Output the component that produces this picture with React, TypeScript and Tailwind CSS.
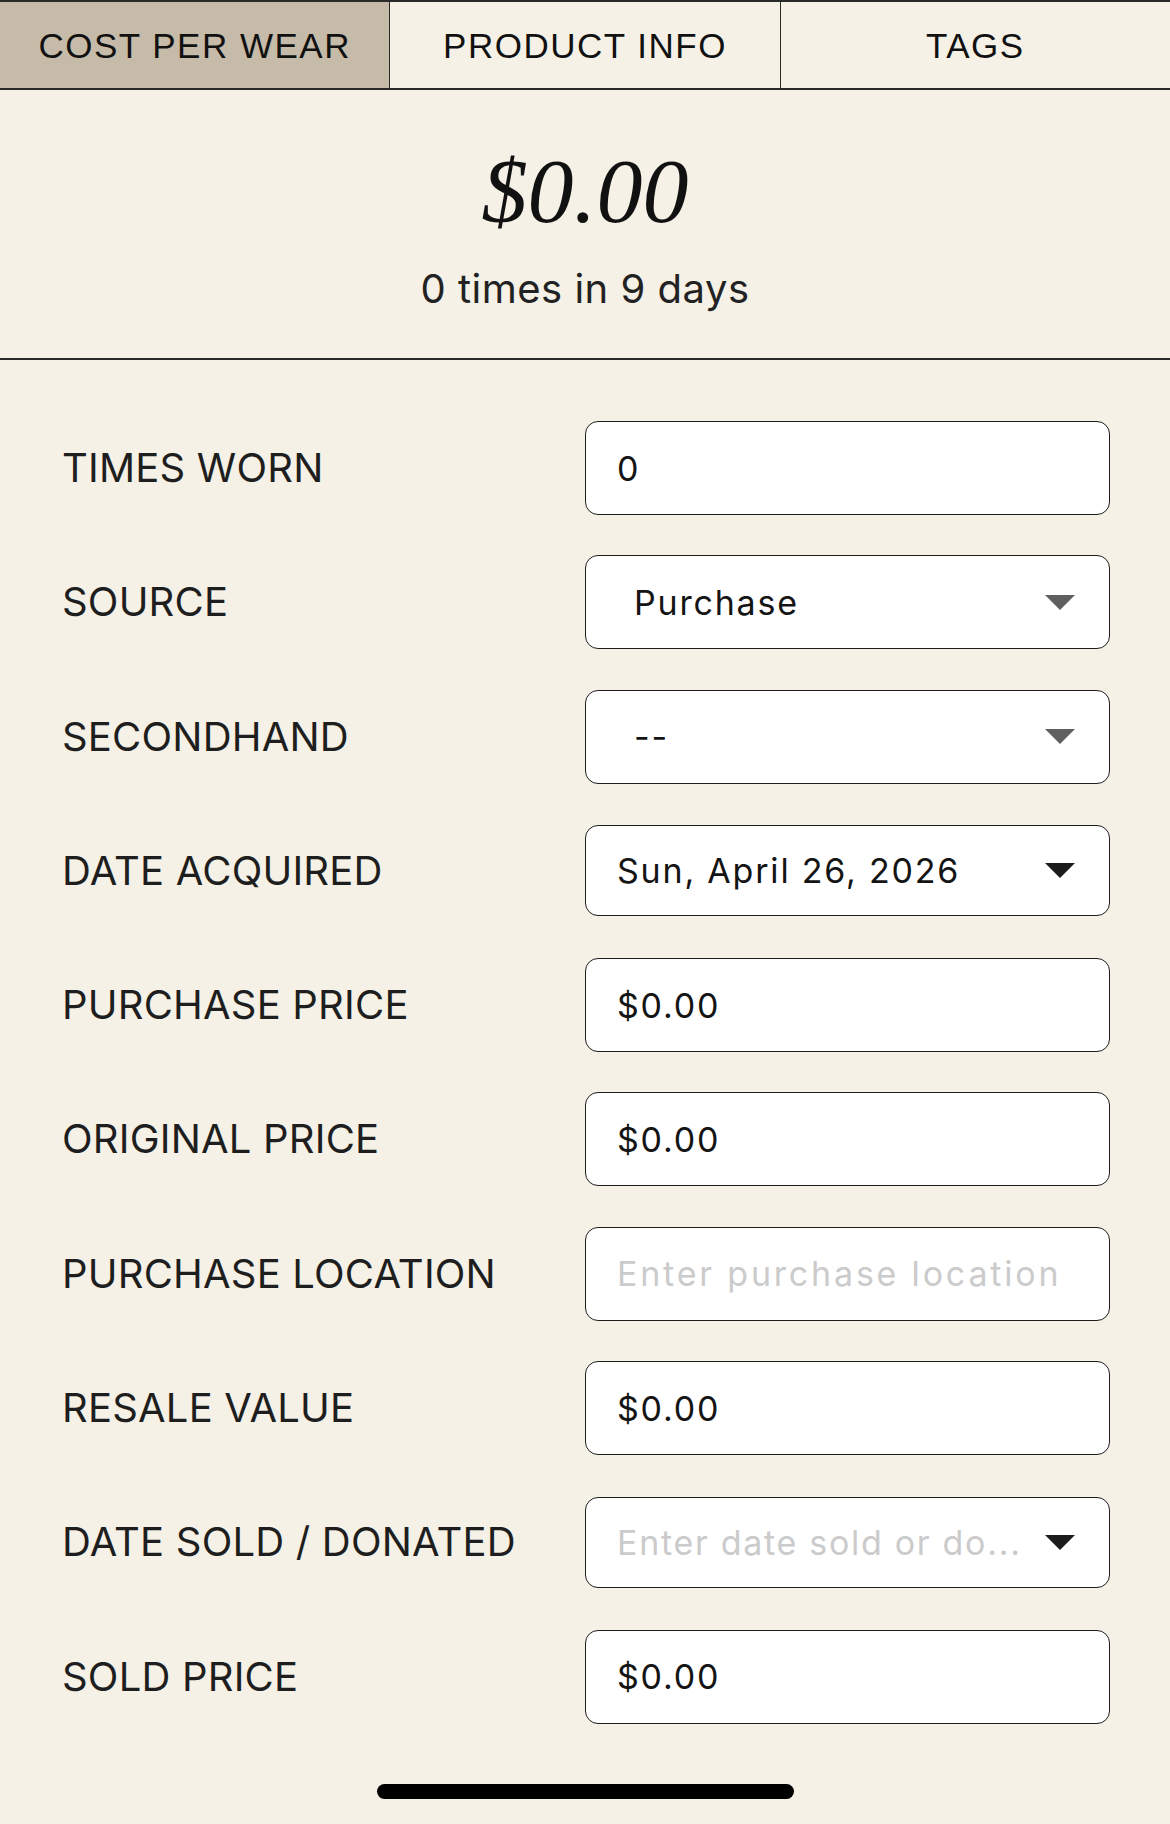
import React from 'react';

type Field = {
  label: string;
  value?: string;
  placeholder?: string;
  kind: 'input' | 'select' | 'date';
};

const fields: Field[] = [
  { label: 'TIMES WORN', value: '0', kind: 'input' },
  { label: 'SOURCE', value: 'Purchase', kind: 'select' },
  { label: 'SECONDHAND', value: '--', kind: 'select' },
  { label: 'DATE ACQUIRED', value: 'Sun, April 26, 2026', kind: 'date' },
  { label: 'PURCHASE PRICE', value: '$0.00', kind: 'input' },
  { label: 'ORIGINAL PRICE', value: '$0.00', kind: 'input' },
  { label: 'PURCHASE LOCATION', placeholder: 'Enter purchase location', kind: 'input' },
  { label: 'RESALE VALUE', value: '$0.00', kind: 'input' },
  { label: 'DATE SOLD / DONATED', placeholder: 'Enter date sold or do...', kind: 'date' },
  { label: 'SOLD PRICE', value: '$0.00', kind: 'input' },
];

const tabs = ['COST PER WEAR', 'PRODUCT INFO', 'TAGS'];

function Caret({ muted }: { muted?: boolean }) {
  return (
    <svg width="30" height="15" viewBox="0 0 30 15" className="shrink-0">
      <path d="M0 0 L30 0 L15 15 Z" fill={muted ? '#5f5f5f' : '#1c1c1c'} />
    </svg>
  );
}

function FieldBox({ field }: { field: Field }) {
  const isDate = field.kind === 'date';
  const hasCaret = field.kind !== 'input';
  const padLeft = field.kind === 'select' ? 'pl-[48px]' : 'pl-[31px]';
  return (
    <div
      className={`flex items-center justify-between w-[525px] ${isDate ? 'h-[91px]' : 'h-[94px]'} ${padLeft} pr-[34px] bg-white border-[1.5px] border-[#1e1e1e] rounded-[13px]`}
    >
      {field.value ? (
        <span className="text-[34px] tracking-[1.8px] text-[#141414] truncate">{field.value}</span>
      ) : (
        <span
          className={`text-[34px] ${isDate ? 'tracking-[1.7px]' : 'tracking-[2.8px]'} text-[#cbcbcb] truncate`}
        >
          {field.placeholder}
        </span>
      )}
      {hasCaret && <Caret muted={field.kind === 'select'} />}
    </div>
  );
}

export default function App() {
  return (
    <div className="w-[1170px] h-[1824px] bg-[#f5f1e6] flex flex-col font-['Inter',sans-serif] text-[#1a1a1a] overflow-hidden">
      {/* Tab strip */}
      <div className="flex h-[90px] border-t-2 border-b-2 border-[#2a2a2a]">
        {tabs.map((tab, i) => (
          <div
            key={tab}
            className={`flex-1 flex items-center justify-center pt-[3px] font-['Liberation_Sans',sans-serif] font-medium text-[35px] tracking-[1.5px] text-[#111] ${
              i === 0 ? 'bg-[#c6bba9]' : ''
            } ${i < tabs.length - 1 ? 'border-r border-[#2a2a2a]' : ''}`}
          >
            {tab}
          </div>
        ))}
      </div>

      {/* Cost per wear summary */}
      <div className="h-[270px] flex flex-col items-center border-b-2 border-[#2a2a2a]">
        <div className="mt-[55px] font-['Liberation_Serif',serif] italic text-[92px] leading-none text-[#111]">
          $0.00
        </div>
        <div className="mt-[22px] text-[40px] tracking-[0.5px] text-[#222]">0 times in 9 days</div>
      </div>

      {/* Details form */}
      <div className="flex flex-col gap-[40.3px] pt-[61px] pl-[62px] pr-[60px]">
        {fields.map((f) => (
          <div key={f.label} className="flex items-center justify-between h-[94px]">
            <span className="text-[40px] tracking-[0.2px] text-[#1e1e1e]">{f.label}</span>
            <FieldBox field={f} />
          </div>
        ))}
      </div>

      {/* Home indicator */}
      <div className="mt-auto mb-[25px] flex justify-center">
        <div className="w-[417px] h-[15px] rounded-full bg-black" />
      </div>
    </div>
  );
}
